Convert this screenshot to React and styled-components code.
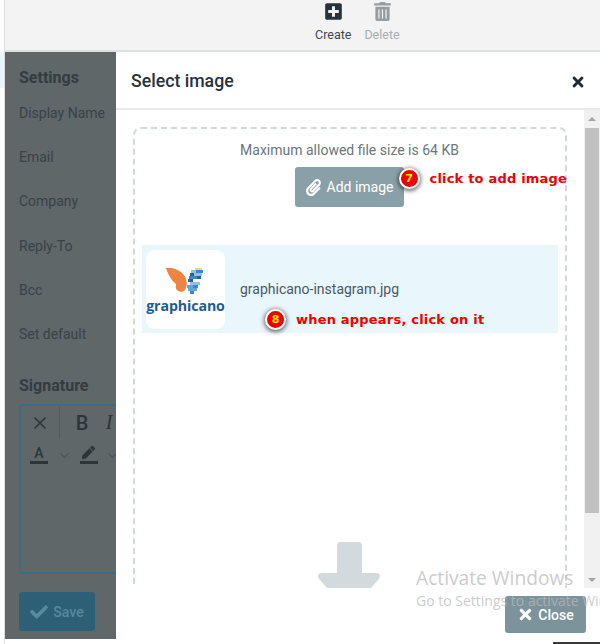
import React from "react";
import styled, { createGlobalStyle } from "styled-components";
import { FaPlusSquare, FaTrashAlt, FaPaperclip, FaTimes, FaCheck, FaPen } from "react-icons/fa";
import { FiChevronDown, FiX } from "react-icons/fi";

const Global = createGlobalStyle`
  html, body {
    margin: 0;
    padding: 0;
    background: #fff;
    overflow: hidden;
  }
  * { box-sizing: border-box; }
`;

const Page = styled.div`
  position: relative;
  width: 600px;
  height: 644px;
  overflow: hidden;
  font-family: Roboto, "Liberation Sans", sans-serif;
  display: flex;
  flex-direction: column;
`;

const TopBar = styled.header`
  height: 52px;
  flex: none;
  margin-left: 4px;
  padding-left: 310px;
  background: #f3f3f3;
  border-left: 1px solid #dcdfe0;
  border-bottom: 2px solid #dfe2e3;
  display: flex;
  gap: 13px;
`;

const Tool = styled.div`
  display: flex;
  flex-direction: column;
  align-items: center;
  gap: 6px;
  padding-top: 2px;
  font-size: 12.5px;
  line-height: 16px;
  color: ${(p) => (p.$off ? "#a8adb0" : "#3c4650")};
  svg {
    font-size: 19px;
    color: ${(p) => (p.$off ? "#989c9e" : "#27323d")};
  }
`;

const Main = styled.div`
  flex: 1;
  min-height: 0;
  display: flex;
`;

const Gutter = styled.div`
  width: 5px;
  flex: none;
  background: linear-gradient(#e9f6fc 36px, #fff 36px);
  border-right: 1px solid #dcdfe0;
`;

const Sidebar = styled.aside`
  width: 111px;
  flex: none;
  height: 587px;
  padding: 16px 0 0 14px;
  background: #5f6769;
  overflow: hidden;
`;

const SideTitle = styled.h3`
  margin: 0;
  font-size: 16px;
  line-height: 20px;
  font-weight: 700;
  color: #343c40;
`;

const SideRows = styled.div`
  margin-top: 13px;
  margin-bottom: 10px;
  display: flex;
  flex-direction: column;
`;

const SideRow = styled.div`
  height: 44.2px;
  line-height: 24px;
  font-size: 14px;
  color: #394246;
  white-space: nowrap;
`;

const Editor = styled.div`
  width: 120px;
  height: 170px;
  margin-top: 8px;
  border: 2px solid #3b6e82;
  border-radius: 4px;
  color: #2c353a;
`;

const EditorLine = styled.div`
  display: flex;
  align-items: center;
  height: ${(p) => p.$h}px;
`;

const EditorCell = styled.span`
  width: ${(p) => p.$w}px;
  flex: none;
  display: flex;
  justify-content: center;
  align-items: center;
  align-self: stretch;
  font-size: 20px;
  font-weight: 500;
  ${(p) => p.$line && "border-right: 1px solid #525b5e;"}
  ${(p) => p.$italic && "font-style: italic; font-family: 'Liberation Serif', serif;"}
`;

const Under = styled.span`
  display: flex;
  flex-direction: column;
  align-items: center;
  width: 18px;
  font-size: 14px;
  line-height: 15px;
  font-weight: 500;
  border-bottom: 3px solid #2c353a;
  svg { font-size: 13px; margin-bottom: 2px; }
`;

const Caret = styled(FiChevronDown)`
  font-size: 15px;
  color: #4c5659;
  flex: none;
`;

const SaveButton = styled.div`
  width: 76px;
  height: 39px;
  margin-top: 18px;
  border-radius: 3px;
  background: #2d6076;
  color: #59899e;
  display: flex;
  align-items: center;
  justify-content: center;
  gap: 5px;
  font-size: 14px;
  font-weight: 500;
  svg { font-size: 18px; }
`;

const Modal = styled.section`
  flex: 1;
  min-width: 0;
  background: #fff;
  display: flex;
  flex-direction: column;
`;

const ModalHead = styled.div`
  height: 58px;
  flex: none;
  padding: 0 14px 0 15px;
  border-bottom: 2px solid #e8eaeb;
  display: flex;
  align-items: center;
  justify-content: space-between;
`;

const ModalTitle = styled.h2`
  margin: 2px 0 0;
  font-size: 17.7px;
  font-weight: 500;
  color: #27323d;
`;

const CloseX = styled(FaTimes)`
  font-size: 16px;
  margin-top: 3px;
  color: #1f2a35;
`;

const ModalBody = styled.div`
  height: 478px;
  flex: none;
  display: flex;
  overflow: hidden;
`;

const Content = styled.div`
  flex: 1;
  min-width: 0;
  padding: 17px 17px 0;
  overflow: hidden;
`;

const DropZone = styled.div`
  position: relative;
  height: 560px;
  padding: 12px 7px 0;
  border: 2px dashed #d2d9dc;
  border-radius: 8px;
`;

const Limit = styled.p`
  margin: 0 1px 0 0;
  text-align: center;
  font-size: 14px;
  line-height: 18px;
  color: #6c757a;
`;

const AddRow = styled.div`
  display: flex;
  justify-content: center;
  margin: 8px 2px 0 0;
`;

const AddButton = styled.div`
  position: relative;
  width: 109px;
  height: 40px;
  border-radius: 3px;
  background: #8aa0a8;
  color: #fff;
  display: flex;
  align-items: center;
  justify-content: center;
  gap: 5px;
  font-size: 14px;
  svg { font-size: 17px; }
`;

const FileRow = styled.div`
  position: relative;
  height: 88px;
  margin-top: 38px;
  padding: 5px 4px;
  background: #e9f6fc;
  display: flex;
  align-items: center;
  gap: 15px;
`;

const Thumb = styled.div`
  width: 79px;
  height: 79px;
  flex: none;
  border-radius: 9px;
  background: #fff;
  display: flex;
  flex-direction: column;
  align-items: center;
  padding-top: 17px;
  gap: 4px;
  overflow: hidden;
`;

const Brand = styled.span`
  font-family: "Open Sans", sans-serif;
  font-size: 14.2px;
  line-height: 16px;
  font-weight: 700;
  letter-spacing: -0.1px;
  color: #1f5c90;
`;

const FileName = styled.span`
  font-size: 14px;
  color: #4c5861;
`;

const Note = styled.div`
  position: absolute;
  left: ${(p) => p.$x}px;
  top: ${(p) => p.$y}px;
  display: flex;
  align-items: center;
  gap: 10px;
  white-space: nowrap;
`;

const Badge = styled.span`
  width: 21px;
  height: 21px;
  border-radius: 50%;
  background: #f00000;
  border: 2px solid #fff;
  box-shadow: 0 1px 4px 1px rgba(0, 0, 0, 0.55);
  color: #ffe600;
  font-family: "DejaVu Sans", sans-serif;
  font-size: 11px;
  font-weight: 700;
  display: flex;
  align-items: center;
  justify-content: center;
`;

const NoteText = styled.span`
  font-family: "DejaVu Sans", sans-serif;
  font-size: 13px;
  font-weight: 700;
  letter-spacing: 0.2px;
  color: #f00000;
`;

const UploadArrow = styled.svg`
  position: absolute;
  left: 183px;
  top: 413px;
`;

const Scrollbar = styled.div`
  width: 16px;
  flex: none;
  background: #f1f1f1;
  display: flex;
  flex-direction: column;
  align-items: center;
`;

const ScrollArrow = styled.span`
  width: 0;
  height: 0;
  flex: none;
  border-left: 4px solid transparent;
  border-right: 4px solid transparent;
  ${(p) =>
    p.$down
      ? "border-top: 4px solid #a3a3a3; margin-top: auto; margin-bottom: 6px;"
      : "border-bottom: 4px solid #a3a3a3; margin-top: 7px; margin-bottom: 7px;"}
`;

const ScrollThumb = styled.div`
  width: 14px;
  height: 385px;
  flex: none;
  background: #c1c1c1;
`;

const ModalFoot = styled.div`
  flex: 1;
  padding: 8px 14px 0 0;
  display: flex;
  justify-content: flex-end;
  align-items: flex-start;
`;

const CloseButton = styled.div`
  width: 81px;
  height: 37px;
  border-radius: 3px;
  background: #7d939b;
  color: #fff;
  display: flex;
  align-items: center;
  justify-content: center;
  gap: 4px;
  font-size: 14px;
  font-weight: 500;
  svg { font-size: 17px; }
`;

const Watermark = styled.div`
  position: absolute;
  left: 416px;
  top: 566px;
  width: 240px;
  font-family: "Open Sans", sans-serif;
  color: rgba(185, 185, 185, 0.75);
  pointer-events: none;
`;

const WatermarkTitle = styled.div`
  font-size: 19.2px;
  line-height: 24px;
`;

const WatermarkSub = styled.div`
  font-size: 14px;
  line-height: 22px;
`;

const BottomEdge = styled.div`
  position: absolute;
  left: 553px;
  right: 0;
  bottom: 0;
  height: 2px;
  background: #3a3a3a;
`;

const rows = ["Display Name", "Email", "Company", "Reply-To", "Bcc", "Set default"];

// pixel blocks of the right wing: x, y, width, colour
const wing = [
  [29, 1, 7, "#e8d98c"],
  [25, 3, 5, "#8fc1e4"],
  [30, 3, 7, "#3f86c4"],
  [24, 6, 4, "#27609b"],
  [28, 6, 8, "#8fc1e4"],
  [23, 9, 8, "#3f86c4"],
  [31, 9, 4, "#27609b"],
  [22, 12, 5, "#27609b"],
  [24, 15, 10, "#8fc1e4"],
  [21, 18, 6, "#5ea5da"],
  [27, 18, 5, "#3f86c4"],
  [22, 21, 9, "#5ea5da"],
  [24, 24, 4, "#3f86c4"],
];

function Butterfly() {
  return (
    <svg width="40" height="27" viewBox="0 0 40 27">
      <path
        d="M0 1 C8 0 17 4 20 12 C21 15 21 18 20 20 C20 24 16 26 12 24 C9 22 10 19 10 17 C6 14 2 8 0 1Z"
        fill="#f08344"
      />
      {wing.map(([x, y, w, c]) => (
        <rect key={`${x}-${y}`} x={x} y={y} width={w} height="3" fill={c} />
      ))}
    </svg>
  );
}

export default function App() {
  return (
    <Page>
      <Global />
      <TopBar>
        <Tool>
          <FaPlusSquare />
          Create
        </Tool>
        <Tool $off>
          <FaTrashAlt />
          Delete
        </Tool>
      </TopBar>
      <Main>
        <Gutter />
        <Sidebar>
          <SideTitle>Settings</SideTitle>
          <SideRows>
            {rows.map((r) => (
              <SideRow key={r}>{r}</SideRow>
            ))}
          </SideRows>
          <SideTitle>Signature</SideTitle>
          <Editor>
            <EditorLine $h={33}>
              <EditorCell $w={39} $line>
                <FiX />
              </EditorCell>
              <EditorCell $w={44}>B</EditorCell>
              <EditorCell $w={10} $italic>
                I
              </EditorCell>
            </EditorLine>
            <EditorLine $h={32}>
              <EditorCell $w={36}>
                <Under>A</Under>
              </EditorCell>
              <Caret />
              <EditorCell $w={33}>
                <Under>
                  <FaPen />
                </Under>
              </EditorCell>
              <Caret />
            </EditorLine>
          </Editor>
          <SaveButton>
            <FaCheck />
            Save
          </SaveButton>
        </Sidebar>
        <Modal>
          <ModalHead>
            <ModalTitle>Select image</ModalTitle>
            <CloseX />
          </ModalHead>
          <ModalBody>
            <Content>
              <DropZone>
                <Limit>Maximum allowed file size is 64 KB</Limit>
                <AddRow>
                  <AddButton>
                    <FaPaperclip />
                    Add image
                    <Note $x={104} $y={1}>
                      <Badge>7</Badge>
                      <NoteText>click to add image</NoteText>
                    </Note>
                  </AddButton>
                </AddRow>
                <FileRow>
                  <Thumb>
                    <Butterfly />
                    <Brand>graphicano</Brand>
                  </Thumb>
                  <FileName>graphicano-instagram.jpg</FileName>
                  <Note $x={123} $y={64}>
                    <Badge>8</Badge>
                    <NoteText>when appears, click on it</NoteText>
                  </Note>
                </FileRow>
                <UploadArrow width="62" height="60" viewBox="0 0 62 60">
                  <path
                    d="M23 0 H40 Q44 0 44 4 V31 H58 Q62 31 62 34 Q62 36 60 38 L52 47 H10 L2 38 Q0 36 0 34 Q0 31 4 31 H19 V4 Q19 0 23 0Z"
                    fill="#d2dadd"
                  />
                </UploadArrow>
              </DropZone>
            </Content>
            <Scrollbar>
              <ScrollArrow />
              <ScrollThumb />
              <ScrollArrow $down />
            </Scrollbar>
          </ModalBody>
          <ModalFoot>
            <CloseButton>
              <FaTimes />
              Close
            </CloseButton>
          </ModalFoot>
        </Modal>
      </Main>
      <Watermark>
        <WatermarkTitle>Activate Windows</WatermarkTitle>
        <WatermarkSub>Go to Settings to activate Windows.</WatermarkSub>
      </Watermark>
      <BottomEdge />
    </Page>
  );
}
